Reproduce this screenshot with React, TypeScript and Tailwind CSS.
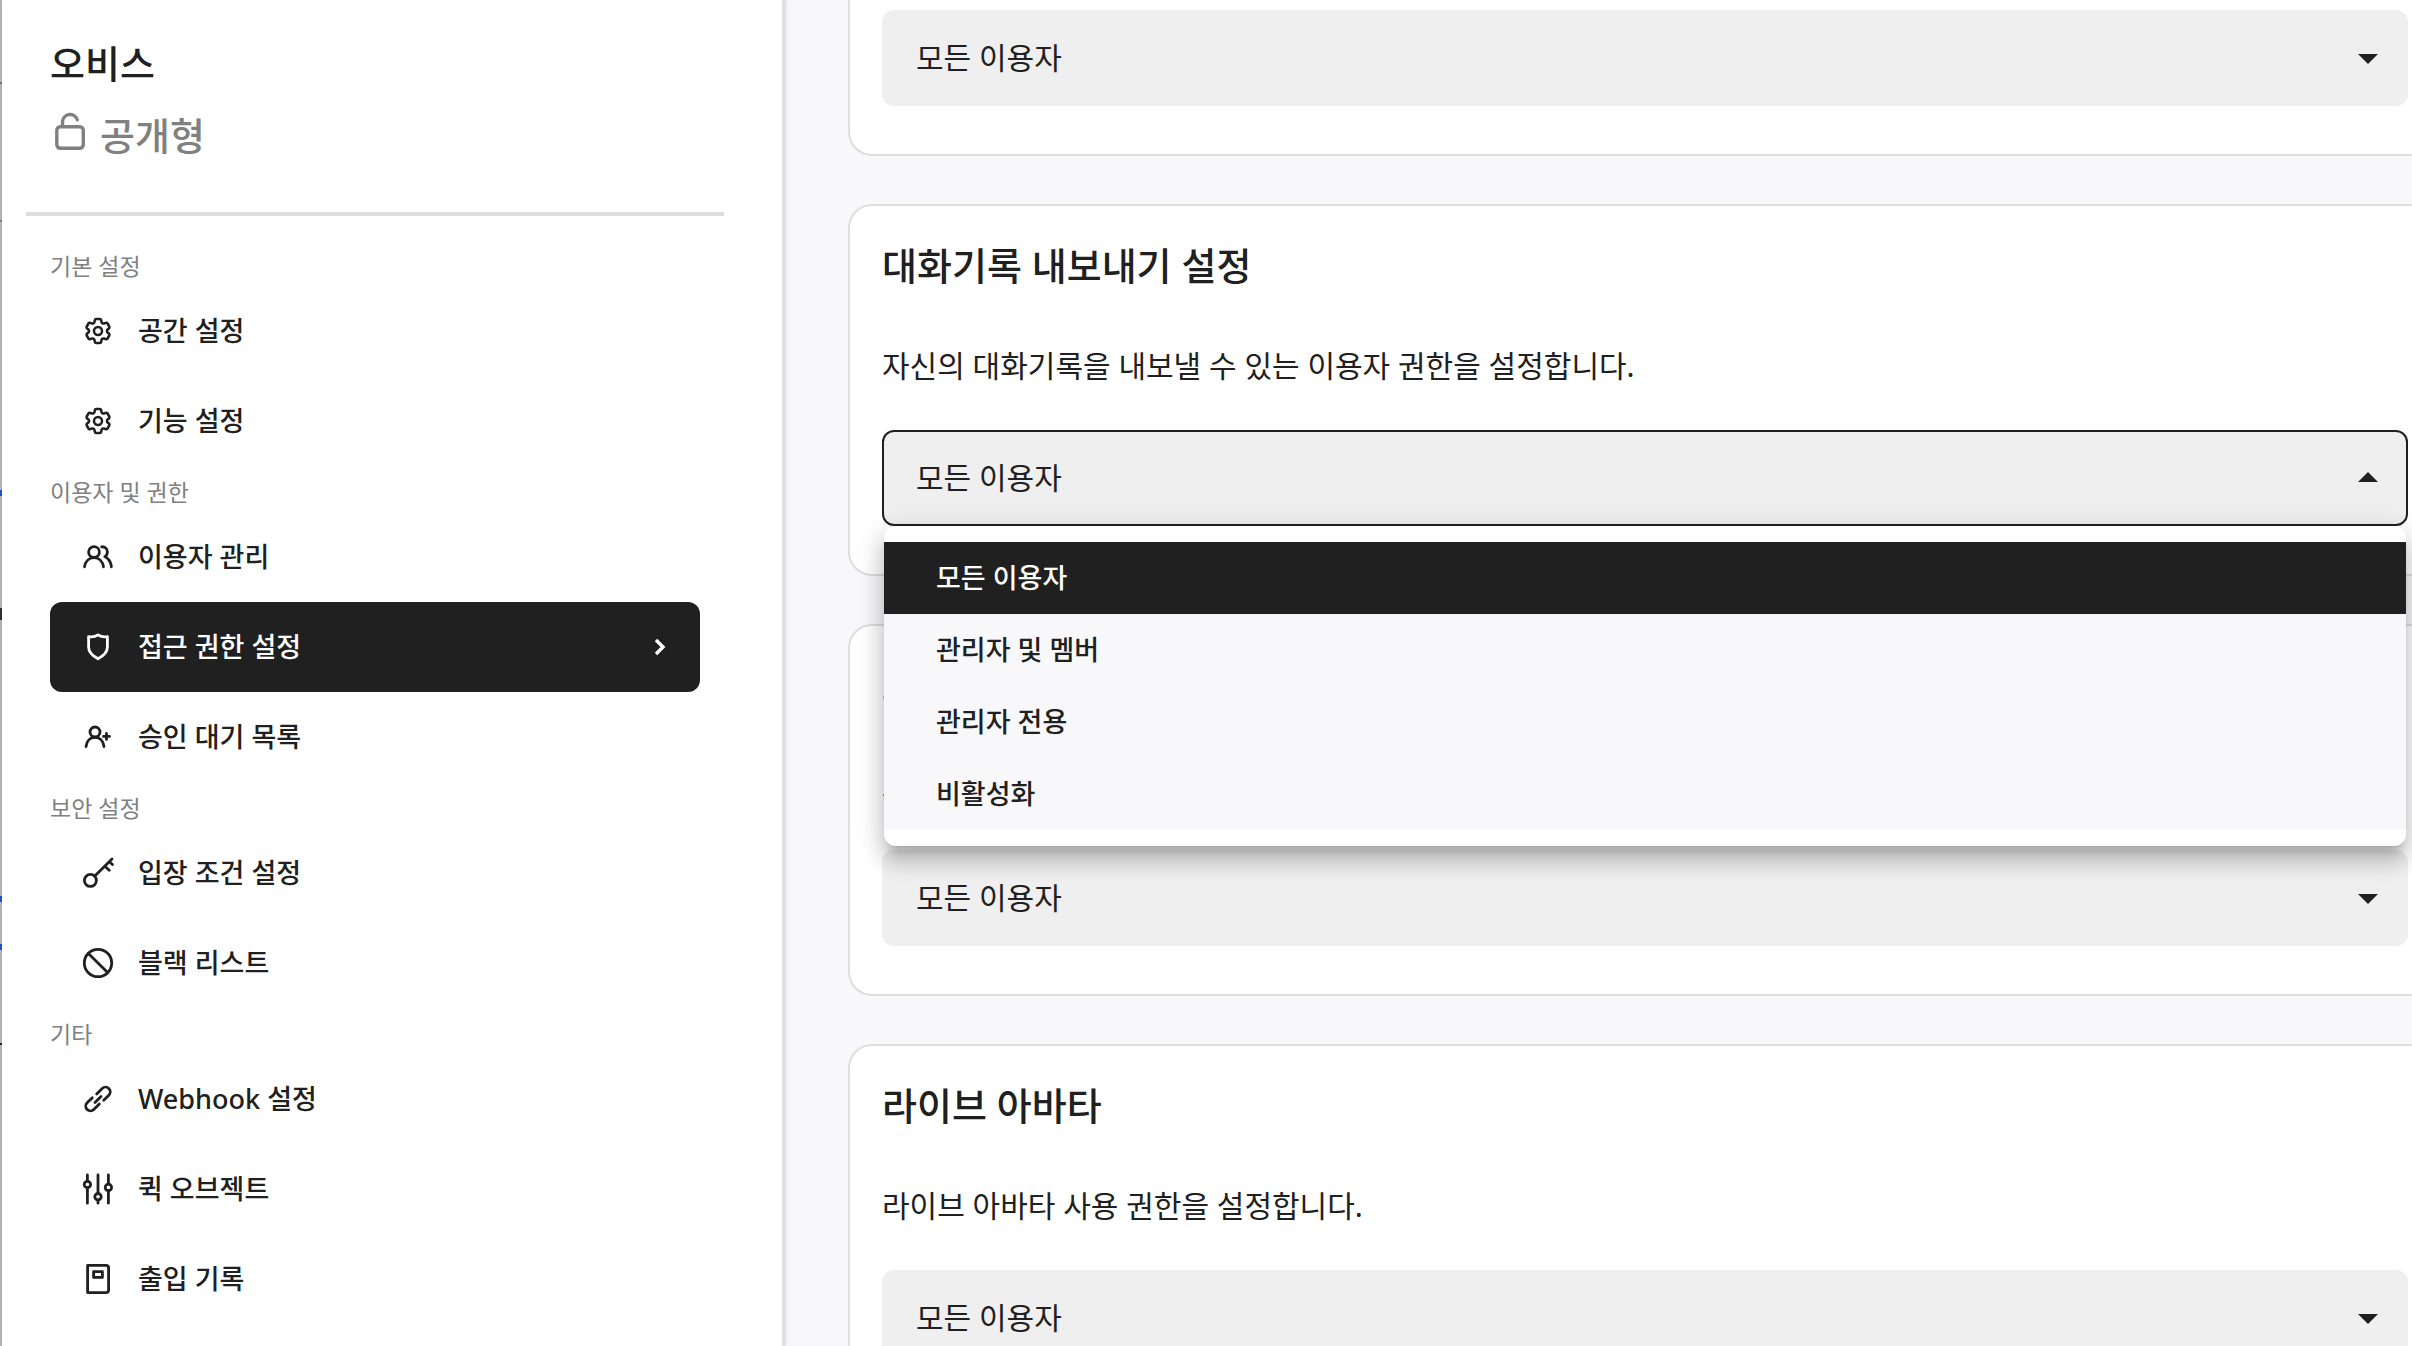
import React, { useState } from "react";
import { HiOutlineCog6Tooth } from "react-icons/hi2";

const OPTIONS = ["모든 이용자", "관리자 및 멤버", "관리자 전용", "비활성화"];

interface IconProps {
  children: React.ReactNode;
}

// Shared 32px frame for the line icons of the side menu
const LineIcon: React.FC<IconProps> = ({ children }) => (
  <svg
    className="size-8 shrink-0"
    viewBox="0 0 32 32"
    fill="none"
    stroke="currentColor"
    strokeWidth="2.8"
    strokeLinecap="round"
    strokeLinejoin="round"
    aria-hidden="true"
  >
    {children}
  </svg>
);

const GearIcon = () => <HiOutlineCog6Tooth className="size-8 shrink-0 stroke-[1.9]" aria-hidden="true" />;

const UsersIcon = () => (
  <LineIcon>
    <circle cx="12" cy="11" r="5.4" />
    <path d="M2.5 25.8C3.4 20.4 7 16.6 12 16.6s8.6 3.8 9.5 9.2" />
    <path d="M19.6 5.8c3.2-.5 5.8 2 5.8 5.2 0 2-1 3.7-2.6 4.6 3.6 1.8 6 5.6 6.6 10.2" />
  </LineIcon>
);

const ShieldIcon = () => (
  <LineIcon>
    <path d="M16 3.8c-2.8 1.9-6 2.4-9.4 1.8V16c0 5.2 4.2 9 9.4 11.8 5.200-2.8 9.4-6.6 9.4-11.8V5.6c-3.4.6-6.6.1-9.4-1.8z" />
  </LineIcon>
);

const UserPlusIcon = () => (
  <LineIcon>
    <circle cx="13" cy="11" r="5" />
    <path d="M4 25.5c.6-5.2 4-9.2 9-9.2s8.4 4 9 9.2" />
    <path d="M24.5 12.4v6M21.5 15.4h6" />
  </LineIcon>
);

const KeyIcon = () => (
  <LineIcon>
    <circle cx="8.400" cy="23.4" r="6" />
    <path d="M12.8 19 30 1.9M22.8 9.2l4.4 4M27.4 4.800l3 2.8" />
  </LineIcon>
);

const BanIcon = () => (
  <LineIcon>
    <circle cx="16" cy="16" r="13.7" />
    <path d="M6.4 6.4l19.2 19.2" />
  </LineIcon>
);

const LinkIcon = () => (
  <LineIcon>
    <path d="M14.7 11l5.5-5.5a4.7 4.7 0 0 1 6.65 6.65L21.7 17.3" />
    <path d="M17.3 21l-5.5 5.5a4.7 4.7 0 0 1-6.65-6.65L10.3 14.7" />
    <path d="M13 19.4l6-6" />
  </LineIcon>
);

const SlidersIcon = () => (
  <LineIcon>
    <path d="M5.4 2v6M5.4 15v15.2M16 2v18.2M16 27.2v3M26.4 2v9M26.4 18v12.2" />
    <circle cx="5.4" cy="11.5" r="3.2" />
    <circle cx="16" cy="23.7" r="3.2" />
    <circle cx="26.4" cy="14.4" r="3.2" />
  </LineIcon>
);

const LogIcon = () => (
  <LineIcon>
    <path d="M5.6 2.4H24a2.6 2.6 0 0 1 2.6 2.6v22a2.6 2.6 0 0 1-2.6 2.6H5.6z" />
    <path d="M11.6 8.6h8.8v5.800h-8.8z" />
  </LineIcon>
);

const menu = [
  {
    title: "기본 설정",
    items: [
      { label: "공간 설정", icon: <GearIcon /> },
      { label: "기능 설정", icon: <GearIcon /> },
    ],
  },
  {
    title: "이용자 및 권한",
    items: [
      { label: "이용자 관리", icon: <UsersIcon /> },
      { label: "접근 권한 설정", icon: <ShieldIcon /> },
      { label: "승인 대기 목록", icon: <UserPlusIcon /> },
    ],
  },
  {
    title: "보안 설정",
    items: [
      { label: "입장 조건 설정", icon: <KeyIcon /> },
      { label: "블랙 리스트", icon: <BanIcon /> },
    ],
  },
  {
    title: "기타",
    items: [
      { label: "Webhook 설정", icon: <LinkIcon /> },
      { label: "퀵 오브젝트", icon: <SlidersIcon /> },
      { label: "출입 기록", icon: <LogIcon /> },
    ],
  },
];

interface MenuItemProps {
  label: string;
  icon: React.ReactNode;
  active: boolean;
  onSelect: () => void;
}

const MenuItem: React.FC<MenuItemProps> = ({ label, icon, active, onSelect }) => (
  <li>
    <a
      href="#"
      onClick={(e) => {
        e.preventDefault();
        onSelect();
      }}
      className={
        active
          ? "flex h-[90px] items-center gap-6 rounded-xl bg-[#202020] pl-8 pr-7 text-white"
          : "flex h-[90px] items-center gap-6 rounded-xl pl-8 pr-7"
      }
    >
      {icon}
      <span className="flex-1 text-[27px] font-medium">{label}</span>
      {active && (
        <svg className="size-6" viewBox="0 0 24 24" fill="none" stroke="currentColor" strokeWidth="3.4" aria-hidden="true">
          <path d="M8 5l7 7-7 7" />
        </svg>
      )}
    </a>
  </li>
);

const Sidebar = () => {
  const [current, setCurrent] = useState("접근 권한 설정");

  return (
    <aside className="relative z-10 w-[783px] shrink-0 border-r-3 border-[#dedede] bg-white pl-6 pr-[58px] shadow-[1px_0_3px_rgba(0,0,0,0.12)]">
      <header className="border-b-4 border-[#dedede] px-6 pb-[50px] pt-9">
        <h1 className="text-[38px]/[54px] font-medium">오비스</h1>
        <p className="mt-[18px] flex items-center gap-[10px] text-[38px]/[54px] font-medium text-[#808080]">
          <svg className="h-12 w-10" viewBox="0 0 40 48" fill="none" stroke="currentColor" strokeWidth="3.4" strokeLinecap="round" aria-hidden="true">
            <rect x="6.8" y="15.7" width="26.5" height="21.5" rx="3.5" />
            <path d="M12.5 15.5V10.5a7.6 7.6 0 0 1 14.8-1.8" />
          </svg>
          공개형
        </p>
      </header>
      <nav className="px-6 pt-6">
        {menu.map((group) => (
          <section key={group.title}>
            <h2 className="pb-[2px] pt-2 text-[23px]/[36px] text-[#808080]">{group.title}</h2>
            <ul>
              {group.items.map((item) => (
                <MenuItem
                  key={item.label}
                  {...item}
                  active={current === item.label}
                  onSelect={() => setCurrent(item.label)}
                />
              ))}
            </ul>
          </section>
        ))}
      </nav>
    </aside>
  );
};

interface PermissionSelectProps {
  id: string;
  label?: string;
  defaultOpen?: boolean;
}

const PermissionSelect: React.FC<PermissionSelectProps> = ({ id, label, defaultOpen = false }) => {
  const [open, setOpen] = useState(defaultOpen);
  const [value, setValue] = useState(OPTIONS[0]);

  return (
    <div className="relative">
      <select
        id={id}
        aria-label={label}
        value={value}
        onChange={(e) => setValue(e.target.value)}
        className={
          open
            ? "block h-24 w-full appearance-none rounded-xl border-2 border-[#202020] bg-[#efefef] px-8 pb-[2px] text-[30px] outline-none"
            : "block h-24 w-full appearance-none rounded-xl border-2 border-[#efefef] bg-[#efefef] px-8 pb-[2px] text-[30px] outline-none"
        }
      >
        {OPTIONS.map((option) => (
          <option key={option} value={option}>
            {option}
          </option>
        ))}
      </select>
      <svg
        className={
          open
            ? "pointer-events-none absolute right-4 top-6 size-12 rotate-180"
            : "pointer-events-none absolute right-4 top-6 size-12"
        }
        viewBox="0 0 24 24"
        fill="currentColor"
        aria-hidden="true"
      >
        <path d="M7 10l5 5 5-5z" />
      </svg>
      {open && (
        <ul
          role="listbox"
          className="absolute inset-x-[2px] top-full z-20 rounded-xl bg-white py-4 shadow-[0_10px_10px_-6px_rgba(0,0,0,0.2),0_16px_20px_2px_rgba(0,0,0,0.14),0_6px_28px_4px_rgba(0,0,0,0.12)]"
        >
          {OPTIONS.map((option) => (
            <li
              key={option}
              role="option"
              aria-selected={option === value}
              onClick={() => {
                setValue(option);
                setOpen(false);
              }}
              className={
                option === value
                  ? "flex h-[72px] items-center bg-[#202020] px-[52px] text-[27px] font-medium text-white"
                  : "flex h-[72px] items-center bg-[#f8f8fa] px-[52px] text-[27px] font-medium"
              }
            >
              {option}
            </li>
          ))}
        </ul>
      )}
    </div>
  );
};

interface PermissionCardProps {
  id: string;
  title: string;
  desc: string;
  open?: boolean;
}

const PermissionCard: React.FC<PermissionCardProps> = ({ id, title, desc, open }) => (
  <section className="rounded-3xl border-2 border-[#dedede] bg-white px-8 pb-12 pt-8">
    <h2 className="text-[38px]/[54px] font-medium">
      <label htmlFor={id}>{title}</label>
    </h2>
    <p className="mb-10 mt-[50px] text-[30px]/[48px]">{desc}</p>
    <PermissionSelect id={id} defaultOpen={open} />
  </section>
);

const App = () => {
  return (
    <div className="flex h-screen overflow-hidden bg-[#f8f8fa] font-['Noto_Sans','Noto_Sans_CJK_KR',sans-serif] text-[#202020]">
      {/* Edge of the page behind the settings panel */}
      <div className="relative w-[2px] shrink-0 bg-[#b4b4b4]">
        <span className="absolute top-[82px] h-[2px] w-full bg-[#707070]" />
        <span className="absolute top-[220px] h-[2px] w-full bg-[#808080]" />
        <span className="absolute top-[490px] h-[6px] w-full bg-[#1f55c8]" />
        <span className="absolute top-[608px] h-[12px] w-full bg-[#303030]" />
        <span className="absolute top-[896px] h-[6px] w-full bg-[#1f55c8]" />
        <span className="absolute top-[944px] h-[6px] w-full bg-[#1f55c8]" />
        <span className="absolute top-[1043px] h-[2px] w-full bg-[#202020]" />
      </div>
      <Sidebar />
      <main className="min-w-0 flex-1 pl-[63px]">
        {/* The cards run past the right edge of the window */}
        <div className="-mr-[30px] flex flex-col gap-12">
          <section className="rounded-b-3xl border-2 border-t-0 border-[#dedede] bg-white px-8 pb-12 pt-[10px]">
            <PermissionSelect id="default-permission" label="이용자 권한" />
          </section>
          <PermissionCard
            id="chat-export"
            title="대화기록 내보내기 설정"
            desc="자신의 대화기록을 내보낼 수 있는 이용자 권한을 설정합니다."
            open
          />
          <PermissionCard id="screen-share" title="스크린 공유" desc="스크린 공유 사용 권한을 설정합니다." />
          <PermissionCard id="live-avatar" title="라이브 아바타" desc="라이브 아바타 사용 권한을 설정합니다." />
        </div>
      </main>
    </div>
  );
};

export default App;
